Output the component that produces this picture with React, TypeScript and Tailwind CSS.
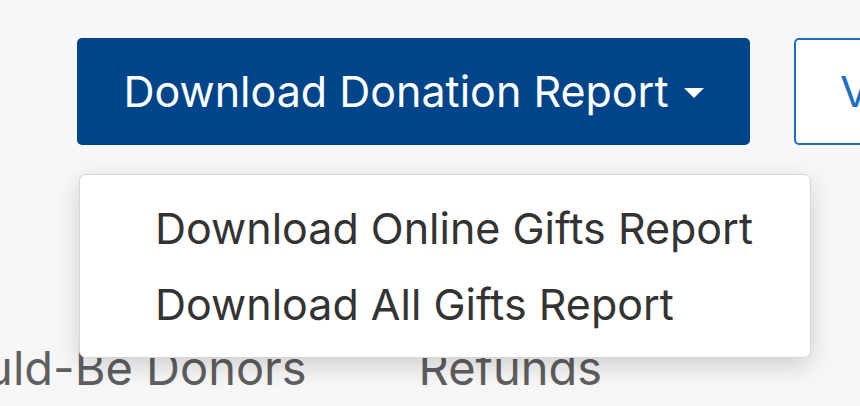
import { useState } from 'react';

type Tab = {
  id: string;
  label: string;
};

const tabs: Tab[] = [
  { id: 'would-be', label: 'Would-Be Donors' },
  { id: 'refunds', label: 'Refunds' },
];

const reportOptions = ['Download Online Gifts Report', 'Download All Gifts Report'];

const App: React.FC = () => {
  const [open, setOpen] = useState(true);

  return (
    <div className="h-[406px] w-[860px] overflow-hidden bg-[#f7f7f7] font-['Inter',sans-serif]">
      <div className="flex gap-[44px] pl-[77px] pt-[38px]">
        <div className="relative">
          <button
            onClick={() => setOpen(!open)}
            className="flex h-[107px] w-[673px] items-center justify-center gap-[15px] whitespace-nowrap rounded-[5px] bg-[#00448a] text-[43px] text-white"
          >
            Download Donation Report
            <svg width="20" height="10" viewBox="0 0 20 10" className="mt-[2px]">
              <path d="M0 0h20L10 10z" fill="currentColor" />
            </svg>
          </button>

          {/* Report dropdown menu */}
          {open && (
            <div className="absolute left-[2px] top-[136px] z-10 flex w-[732px] flex-col rounded-[7px] border border-[#d6d6d6] bg-white py-[15px] shadow-[0_8px_24px_rgba(0,0,0,0.16)]">
              {reportOptions.map((option) => (
                <button
                  key={option}
                  className="h-[76px] whitespace-nowrap pl-[75px] pr-[30px] text-left text-[43px] text-[#333]"
                >
                  {option}
                </button>
              ))}
            </div>
          )}
        </div>
        <button className="h-[107px] w-[300px] shrink-0 rounded-[5px] border-2 border-[#1f6fbf] bg-white px-[44px] text-left text-[43px] text-[#1f6fbf]">
          View
        </button>
      </div>

      <div className="-ml-[87px] mt-[199px] flex gap-[112px] whitespace-nowrap">
        {tabs.map((tab) => (
          <span key={tab.id} className="text-[47px] leading-none text-[#5f5f5f]">
            {tab.label}
          </span>
        ))}
      </div>
    </div>
  );
};

export default App;
